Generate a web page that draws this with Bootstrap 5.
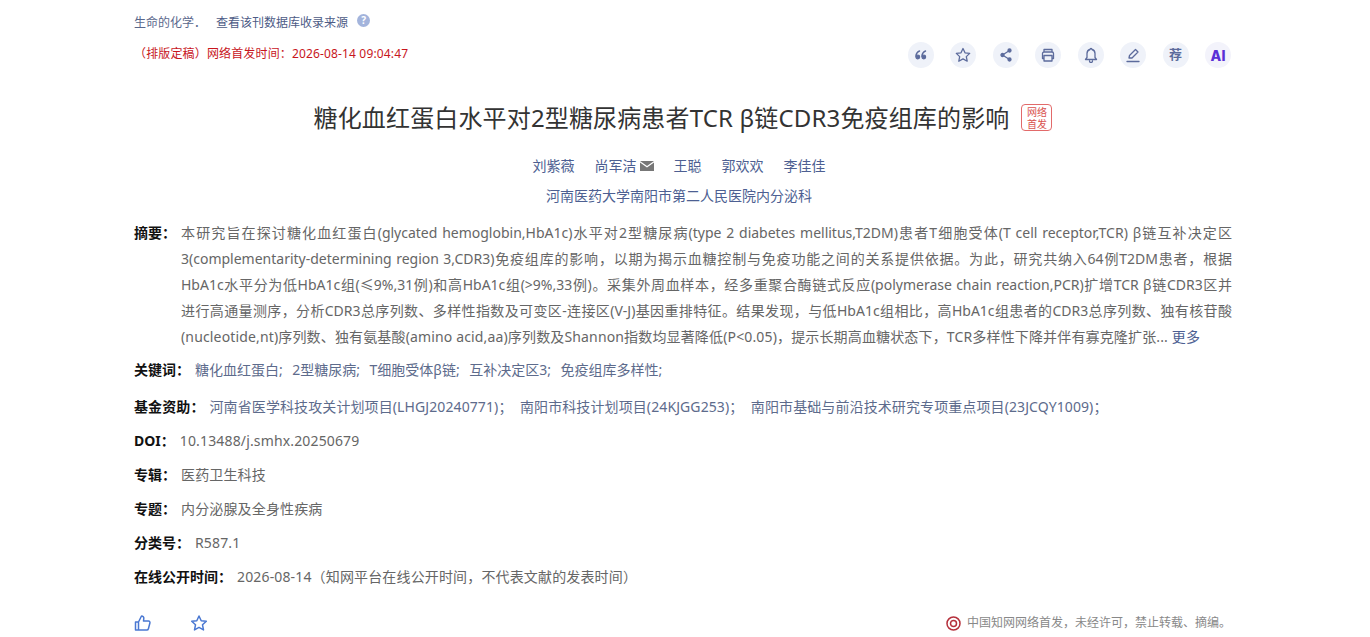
<!DOCTYPE html>
<html lang="zh">
<head>
<meta charset="utf-8">
<title>糖化血红蛋白水平对2型糖尿病患者TCR β链CDR3免疫组库的影响</title>
<link href="https://cdn.jsdelivr.net/npm/bootstrap@5.3.0/dist/css/bootstrap.min.css" rel="stylesheet">
<style>
html,body{height:637px;overflow:hidden;background:#fff}
body{font-family:"Noto Sans","Noto Sans CJK SC",sans-serif;font-size:14px;color:#666}
.sheet{width:1098px;margin-left:134px}
.topline{height:43px;padding-top:14px;font-size:12px;line-height:18px;color:#4d5b86}
.topline .jname{color:#5a678c;margin-right:10px}
.qmark{width:13px;height:13px;border-radius:50%;background:#a3b4dc;color:#fff;font-size:10px;line-height:13px;text-align:center;margin-left:9px;font-weight:700}
.stampline{height:43px}
.pubtime{font-size:12px;line-height:22px;color:#c8161d;margin:0;letter-spacing:.15px}
.tool{width:26px;height:26px;border-radius:50%;background:#eff2f9;color:#5c6b9c;font-size:13px;font-weight:700}
.tool svg{width:16px;height:16px;fill:none;stroke:#5c6b9c;stroke-width:1.3;stroke-linecap:round;stroke-linejoin:round}
.tool.ai{background:#f3f3fb;font-family:"Inter",sans-serif;font-size:14px;font-weight:800;color:#5a2fd6}
.tools{gap:16.5px;margin-top:-1px;padding-right:1px}
.headline{font-size:24px;line-height:34px;font-weight:400;color:#333;margin:0;padding-top:15px;height:56px;gap:12px;letter-spacing:.15px}
.netbadge{width:31px;height:27px;border:1px solid #e26a6a;border-radius:4px;color:#d9534f;font-size:10px;line-height:12px;letter-spacing:0;text-align:center;padding-top:1px;margin-top:3px}
.authors{margin-top:13px;height:30px;line-height:22px;color:#4d5f92;gap:20px;font-size:14px;padding-right:8px}
.authors svg{width:14px;height:10px;margin-left:3px;vertical-align:0}
.affil{height:22px;line-height:22px;color:#4d5f92;font-size:14px;text-align:center;margin-bottom:13px;padding-right:8px}
.lab{font-weight:700;color:#111;flex:none}
.absrow{line-height:26px;font-size:14px}
.absrow .lab{width:47px}
.absrow .oneline{text-align-last:justify;white-space:nowrap}
.absrow .lastline{white-space:nowrap;letter-spacing:.15px}
.more{color:#4d5f92}
.itemrow{line-height:22px;white-space:nowrap}
.itemrow .lab{margin-right:5px}
.kw{margin-top:9px;height:22px;color:#5d6b8c}
.kw .term{margin-right:9.5px}
.fund{margin-top:15px;height:22px;color:#5d6b8c;letter-spacing:.1px}
.plain{margin-top:12px;height:22px;letter-spacing:.15px}
.plain .lab{letter-spacing:0}
.footbar{margin-top:22px;height:26px;color:#888;font-size:12px}
.thumbs{gap:38px}
.thumbs svg{width:18px;height:18px;fill:none;stroke:#4a78d2;stroke-width:1.5;stroke-linejoin:round;stroke-linecap:round}
.notice svg{width:15px;height:15px;margin-right:6px}
.notice{padding-right:1px}
</style>
</head>
<body>
<div class="sheet">
  <div class="topline d-flex align-items-start">
    <span class="jname">生命的化学．</span><span>查看该刊数据库收录来源</span><span class="qmark mt-0 d-inline-block">?</span>
  </div>
  <div class="stampline d-flex justify-content-between align-items-start">
    <p class="pubtime">（排版定稿）网络首发时间：2026-08-14 09:04:47</p>
    <div class="tools d-flex">
      <span class="tool d-flex align-items-center justify-content-center"><svg viewBox="0 0 16 16"><path d="M6.500 4C4.300 5 3 6.800 3 9.300" stroke-width="1.500"/><circle cx="4.800" cy="10" r="1.800" fill="#5c6b9c"/><path d="M12.500 4C10.300 5 9 6.800 9 9.300" stroke-width="1.500"/><circle cx="10.800" cy="10" r="1.800" fill="#5c6b9c"/></svg></span>
      <span class="tool d-flex align-items-center justify-content-center"><svg viewBox="0 0 16 16"><path d="M8 1.500l2 4.300 4.700.6-3.400 3.200.9 4.600L8 11.900l-4.200 2.300.9-4.600L1.300 6.400 6 5.800z"/></svg></span>
      <span class="tool d-flex align-items-center justify-content-center"><svg viewBox="0 0 16 16"><path d="M11.500 3.500L4.500 8l7 4.500"/><circle cx="11.500" cy="3.500" r="1.500" fill="#5c6b9c"/><circle cx="4.500" cy="8" r="1.500" fill="#5c6b9c"/><circle cx="11.500" cy="12.500" r="1.500" fill="#5c6b9c"/></svg></span>
      <span class="tool d-flex align-items-center justify-content-center"><svg viewBox="0 0 16 16"><path d="M4 5V2.500h8V5M4 11.500H2.500v-5a1.500 1.500 0 0 1 1.500-1.500h8a1.500 1.500 0 0 1 1.500 1.500v5H12M4 8.500h8v5.500H4z"/></svg></span>
      <span class="tool d-flex align-items-center justify-content-center"><svg viewBox="0 0 16 16"><path d="M8 1.500a1 1 0 0 1 1 1c2 .5 3 2 3 4v4l1.500 2h-11L4 10.500v-4c0-2 1-3.500 3-4a1 1 0 0 1 1-1zM6.500 14a1.500 1.500 0 0 0 3 0"/></svg></span>
      <span class="tool d-flex align-items-center justify-content-center"><svg viewBox="0 0 16 16"><path d="M2 14.500h12M4 11l.5-2.500L10.500 2.500l2.500 2.500-6 6z"/></svg></span>
      <span class="tool d-flex align-items-center justify-content-center">荐</span>
      <span class="tool ai d-flex align-items-center justify-content-center">AI</span>
    </div>
  </div>
  <div class="d-flex justify-content-center">
    <h1 class="headline d-flex">糖化血红蛋白水平对2型糖尿病患者TCR β链CDR3免疫组库的影响<span class="netbadge d-block">网络<br>首发</span></h1>
  </div>
  <div class="authors d-flex justify-content-center">
    <span>刘紫薇</span>
    <span>尚军洁<svg viewBox="0 0 14 10"><path d="M0 0h14L7 5z" fill="#777"/><path d="M0 1.500V10h14V1.500L7 6.500z" fill="#777"/></svg></span>
    <span>王聪</span>
    <span>郭欢欢</span>
    <span>李佳佳</span>
  </div>
  <div class="affil">河南医药大学南阳市第二人民医院内分泌科</div>
  <div class="absrow d-flex">
    <span class="lab">摘要：</span>
    <div class="flex-grow-1">
      <div class="oneline">本研究旨在探讨糖化血红蛋白(glycated hemoglobin,HbA1c)水平对2型糖尿病(type 2 diabetes mellitus,T2DM)患者T细胞受体(T cell receptor,TCR) β链互补决定区</div>
      <div class="oneline">3(complementarity-determining region 3,CDR3)免疫组库的影响，以期为揭示血糖控制与免疫功能之间的关系提供依据。为此，研究共纳入64例T2DM患者，根据</div>
      <div class="oneline">HbA1c水平分为低HbA1c组(≤9%,31例)和高HbA1c组(&gt;9%,33例)。采集外周血样本，经多重聚合酶链式反应(polymerase chain reaction,PCR)扩增TCR β链CDR3区并</div>
      <div class="oneline">进行高通量测序，分析CDR3总序列数、多样性指数及可变区-连接区(V-J)基因重排特征。结果发现，与低HbA1c组相比，高HbA1c组患者的CDR3总序列数、独有核苷酸</div>
      <div class="lastline">(nucleotide,nt)序列数、独有氨基酸(amino acid,aa)序列数及Shannon指数均显著降低(P&lt;0.05)，提示长期高血糖状态下，TCR多样性下降并伴有寡克隆扩张... <span class="more">更多</span></div>
    </div>
  </div>
  <div class="itemrow kw d-flex"><span class="lab">关键词：</span><span><span class="term">糖化血红蛋白;</span><span class="term">2型糖尿病;</span><span class="term">T细胞受体β链;</span><span class="term">互补决定区3;</span><span class="term">免疫组库多样性;</span></span></div>
  <div class="itemrow fund d-flex"><span class="lab">基金资助：</span><span>河南省医学科技攻关计划项目(LHGJ20240771)；&nbsp; 南阳市科技计划项目(24KJGG253)；&nbsp; 南阳市基础与前沿技术研究专项重点项目(23JCQY1009)；</span></div>
  <div class="itemrow plain d-flex"><span class="lab">DOI：</span><span>10.13488/j.smhx.20250679</span></div>
  <div class="itemrow plain d-flex"><span class="lab">专辑：</span><span>医药卫生科技</span></div>
  <div class="itemrow plain d-flex"><span class="lab">专题：</span><span>内分泌腺及全身性疾病</span></div>
  <div class="itemrow plain d-flex"><span class="lab">分类号：</span><span>R587.1</span></div>
  <div class="itemrow plain d-flex"><span class="lab">在线公开时间：</span><span>2026-08-14（知网平台在线公开时间，不代表文献的发表时间）</span></div>
  <div class="footbar d-flex justify-content-between align-items-center">
    <div class="thumbs d-flex">
      <svg viewBox="0 0 18 18"><path d="M1.500 8h3v8h-3zM4.500 8l3-6c1.500 0 2.500 1 2.300 2.500L9.500 7h5c1 0 1.700 1 1.400 2l-1.500 5.700c-.2.800-.8 1.300-1.600 1.300H4.500"/></svg>
      <svg viewBox="0 0 18 18"><path d="M9 2l2.200 4.700 5.100.6-3.800 3.500 1 5.100L9 13.400l-4.500 2.500 1-5.100-3.800-3.500 5.100-.6z"/></svg>
    </div>
    <div class="notice d-flex align-items-center">
      <svg viewBox="0 0 15 15"><circle cx="7.500" cy="7.500" r="6.500" fill="none" stroke="#b5303c" stroke-width="1.500"/><circle cx="7.500" cy="7.500" r="3" fill="none" stroke="#b5303c" stroke-width="1.500"/></svg>
      <span>中国知网网络首发，未经许可，禁止转载、摘编。</span>
    </div>
  </div>
</div>
<script src="https://cdn.jsdelivr.net/npm/bootstrap@5.3.0/dist/js/bootstrap.bundle.min.js"></script>
</body>
</html>
